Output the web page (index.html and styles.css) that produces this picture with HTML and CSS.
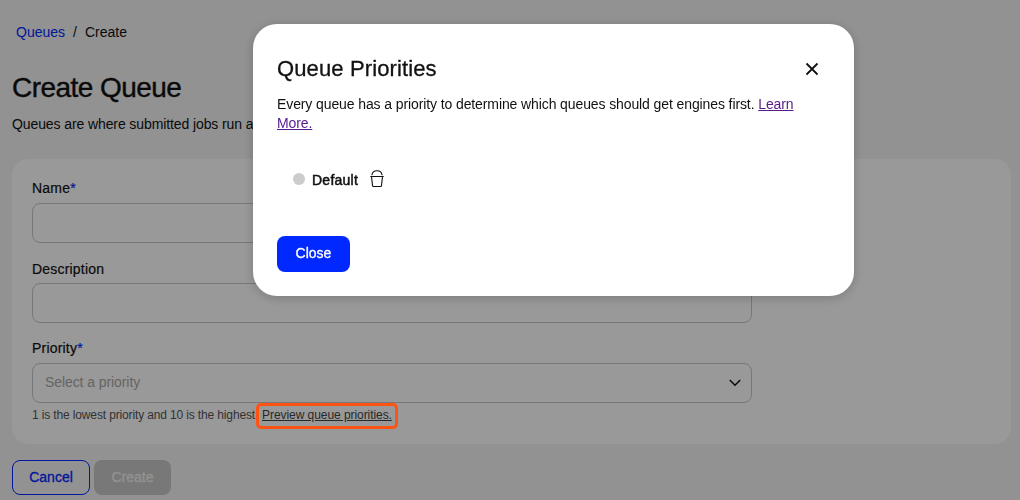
FILE: index.html
```html
<!DOCTYPE html>
<html lang="en">

<head>
    <meta charset="UTF-8">
    <meta name="viewport" content="width=device-width, initial-scale=1.0">
    <title>Create Queue</title>
    <link rel="stylesheet" href="styles.css">
</head>

<body>
    <main class="page">
        <nav class="breadcrumb">
            <a href="#">Queues</a>
            <span class="slash">/</span>
            <span class="current">Create</span>
        </nav>
        <h1>Create Queue</h1>
        <p class="intro">Queues are where submitted jobs run a</p>

        <form class="card">
            <div class="field">
                <label for="name">Name<span class="required">*</span></label>
                <input type="text" id="name">
            </div>
            <div class="field">
                <label for="description" class="low">Description</label>
                <input type="text" id="description">
            </div>
            <div class="field">
                <label>Priority<span class="required">*</span></label>
                <div class="select">
                    <span class="placeholder">Select a priority</span>
                    <svg class="chevron" width="12" height="8" viewBox="0 0 12 8">
                        <path d="M0.8 1 L6 6.2 L11.2 1" />
                    </svg>
                </div>
                <p class="hint"><span class="hint-text">1 is the lowest priority and 10 is the highest.</span> <a href="#" class="preview">Preview queue priorities.</a></p>
            </div>
        </form>

        <div class="actions">
            <button class="btn cancel">Cancel</button>
            <button class="btn create">Create</button>
        </div>
    </main>

    <div class="overlay">
        <div class="modal">
            <div class="modal-header">
                <h2>Queue Priorities</h2>
                <svg class="close-icon" width="14" height="14" viewBox="0 0 14 14">
                    <path d="M1.5 1.5 L12.5 12.5 M12.5 1.5 L1.5 12.5" />
                </svg>
            </div>
            <p class="modal-text">Every queue has a priority to determine which queues should get engines first. <a href="#">Learn<br>More.</a></p>
            <div class="priority">
                <span class="dot"></span>
                <span class="priority-name">Default</span>
                <svg class="bucket" width="14" height="18" viewBox="0 0 14 18">
                    <path d="M0.3 6.5 H13.7 M1.5 6.5 L2.5 15.6 Q2.6 16.5 3.5 16.5 H10.5 Q11.4 16.5 11.5 15.6 L12.5 6.5 M1.9 5.2 C2.2 2.4 4.2 0.7 7 0.7 S11.8 2.4 12.1 5.2" />
                </svg>
            </div>
            <button class="btn close">Close</button>
        </div>
    </div>
    <div class="highlight"></div>
</body>

</html>
```

FILE: styles.css
```css
/**** DEFAULTS ****/

* {
    padding: 0;
    margin: 0;
    box-sizing: border-box;
}

body {
    height: 500px;
    overflow: hidden;
    font-family: "Liberation Sans", Arial, sans-serif;
    font-size: 14px;
    line-height: 20px;
    color: #111;
    background-color: #f3f3f3;
}

/**** PAGE ****/

.page {
    padding: 22px 9px 0 12px;
}

.breadcrumb {
    display: flex;
    gap: 8px;
    padding-left: 4px;
}

.breadcrumb a {
    color: #0028ff;
    text-decoration: none;
}

h1 {
    margin-top: 26px;
    font-size: 28px;
    line-height: 40px;
    font-weight: 400;
    letter-spacing: -0.55px;
    -webkit-text-stroke: 0.4px;
}

.intro {
    margin-top: 6px;
    letter-spacing: -0.1px;
    white-space: nowrap;
}

.card {
    height: 285px;
    margin-top: 25px;
    padding: 19px 20px 0;
    border-radius: 16px;
    background-color: #fff;
}

.field {
    width: 720px;
    height: 80px;
}

.field label {
    display: block;
    height: 25px;
    letter-spacing: 0.2px;
    -webkit-text-stroke: 0.2px;
}

.field .low {
    padding-top: 1px;
}

.required {
    color: #0028ff;
}

.field input,
.select {
    display: flex;
    align-items: center;
    justify-content: space-between;
    width: 100%;
    height: 40px;
    padding: 0 10px 0 12px;
    border: 1px solid #c8c8c8;
    border-radius: 8px;
    background-color: #fff;
}

.placeholder {
    padding-bottom: 2px;
    letter-spacing: -0.08px;
    color: #a8a8a8;
}

.chevron {
    fill: none;
    stroke: #111;
    stroke-width: 1.5;
}

.hint {
    display: flex;
    gap: 2px;
    margin-top: 4px;
    font-size: 12px;
    line-height: 16px;
    color: #555;
}

.hint-text {
    width: 228px;
    letter-spacing: -0.14px;
    white-space: nowrap;
}

.preview {
    letter-spacing: -0.06px;
    color: #444;
}

.actions {
    display: flex;
    gap: 4px;
    margin-top: 16px;
}

.btn {
    height: 35px;
    padding-bottom: 2px;
    border: none;
    border-radius: 8px;
    font-family: inherit;
    font-size: 14px;
    -webkit-text-stroke: 0.3px;
}

.cancel {
    width: 78px;
    border: 1px solid #0028ff;
    color: #0028ff;
    background-color: transparent;
}

.create {
    width: 77px;
    color: #f3f3f3;
    background-color: #c8c8c8;
}

/**** MODAL ****/

.overlay {
    position: fixed;
    inset: 0;
    padding: 24px 0 0 253px;
    background-color: rgba(0, 0, 0, 0.4);
}

.modal {
    width: 601px;
    height: 272px;
    padding: 24px;
    border-radius: 24px;
    background-color: #fff;
    box-shadow: 0 2px 12px rgba(0, 0, 0, 0.2);
}

.modal-header {
    display: flex;
    align-items: center;
    justify-content: space-between;
    height: 42px;
    padding-right: 11px;
}

h2 {
    font-size: 22px;
    line-height: 30px;
    font-weight: 400;
    letter-spacing: 0.12px;
    -webkit-text-stroke: 0.3px;
}

.close-icon {
    fill: none;
    stroke: #111;
    stroke-width: 1.8;
}

.modal-text {
    margin-top: 5px;
    line-height: 19px;
    letter-spacing: -0.105px;
    white-space: nowrap;
}

.modal-text a {
    color: #551a8b;
}

.priority {
    display: flex;
    align-items: center;
    height: 24px;
    margin-top: 34px;
    padding-left: 16px;
}

.dot {
    width: 12px;
    height: 12px;
    margin-right: 7px;
    border-radius: 50%;
    background-color: #ccc;
}

.priority-name {
    width: 58px;
    padding-top: 2px;
    letter-spacing: 0.25px;
    -webkit-text-stroke: 0.5px;
}

.bucket {
    fill: none;
    stroke: #111;
    stroke-width: 1.1;
}

.close {
    display: block;
    width: 73px;
    height: 36px;
    margin-top: 45px;
    color: #fff;
    background-color: #0028ff;
}

/* frame around the preview link, stays above the overlay */
.highlight {
    position: absolute;
    left: 256px;
    top: 403px;
    width: 142px;
    height: 26px;
    border: 3px solid #ff5314;
    border-radius: 5px;
}
```
